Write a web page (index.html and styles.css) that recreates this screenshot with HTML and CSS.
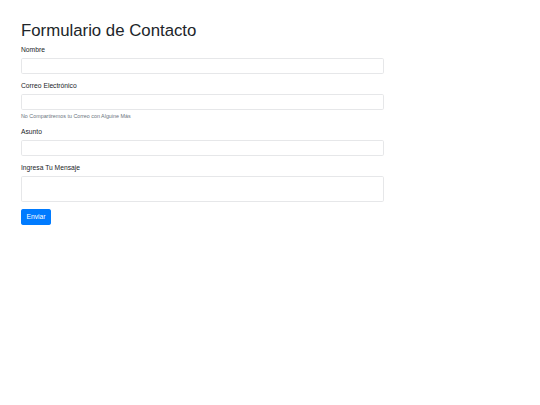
FILE: index.html
```html
<!DOCTYPE html>
<html lang="es">
<head>
<meta charset="utf-8">
<title>Formulario de Contacto</title>
<link rel="stylesheet" href="styles.css">
</head>
<body>
<div class="container">
  <h1 class="title">Formulario de Contacto</h1>
  <form class="form">
    <div class="form-group">
      <label class="label" for="nombre">Nombre</label>
      <input class="control" type="text" id="nombre">
    </div>
    <div class="form-group">
      <label class="label" for="correo">Correo Electrónico</label>
      <input class="control" type="email" id="correo">
      <small class="form-text">No Compartiremos tu Correo con Alguine Más</small>
    </div>
    <div class="form-group">
      <label class="label" for="asunto">Asunto</label>
      <input class="control" type="text" id="asunto">
    </div>
    <div class="form-group">
      <label class="label" for="mensaje">Ingresa Tu Mensaje</label>
      <textarea class="control textarea" id="mensaje"></textarea>
    </div>
    <button class="btn" type="button">Enviar</button>
  </form>
</div>
</body>
</html>
```
FILE: styles.css
```css
html, body {
  margin: 0;
  padding: 0;
  background: #ffffff;
}
body {
  font-family: "Liberation Sans", Arial, sans-serif;
  font-size: 6.72px;
  line-height: 1.5;
  color: #212529;
}
.container {
  width: 363px;
  padding: 21.3px 0 0 21px;
}
.title {
  margin: 0 0 3.36px 0;
  font-size: 16.8px;
  font-weight: 400;
  line-height: 1.2;
}
.form {
  display: flex;
  flex-direction: column;
  align-items: flex-start;
}
.form-group {
  display: flex;
  flex-direction: column;
  width: 100%;
  margin-bottom: 6.72px;
}
.label {
  display: block;
  margin-bottom: 3.36px;
  line-height: 10.08px;
}
.control {
  box-sizing: border-box;
  display: block;
  width: 100%;
  height: 16px;
  margin: 0;
  padding: 2.5px 5px;
  font: inherit;
  color: #495057;
  background: #ffffff;
  border: 1px solid #e6e7e9;
  border-radius: 1.7px;
  outline: none;
}
.textarea {
  height: 25.8px;
  resize: none;
}
.form-text {
  display: block;
  margin-top: 1.68px;
  font-size: 5.376px;
  line-height: 8.06px;
  color: #6c757d;
}
.btn {
  box-sizing: border-box;
  height: 16.4px;
  width: 30px;
  padding: 0;
  margin: 0;
  font: inherit;
  color: #ffffff;
  background: #007bff;
  border: 1px solid #007bff;
  border-radius: 1.7px;
  text-align: center;
}
```
